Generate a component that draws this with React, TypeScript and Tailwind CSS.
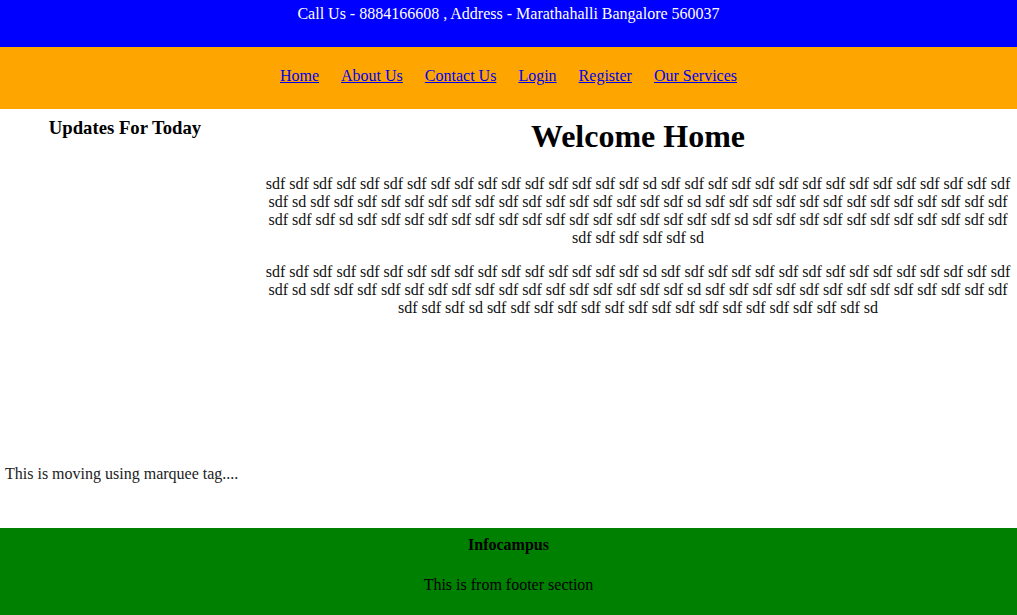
import React from "react";

const chunk = "sdf sdf sdf sdf sdf sdf sdf sdf sdf sdf sdf sdf sdf sdf sdf sdf sd";
const para = (n: number) => Array.from({ length: n }, () => chunk).join(" ");

const links = ["Home", "About Us", "Contact Us", "Login", "Register", "Our Services"];

export default function App() {
  return (
    <div className="font-['Liberation_Serif','Times_New_Roman',serif] text-[16px] text-black bg-white min-h-[615px] flex flex-col">
      <header className="h-[47px] bg-[#0000ff] pt-[5px] text-center text-white leading-[18px]">
        Call Us - 8884166608 , Address - Marathahalli Bangalore 560037
      </header>
      <nav className="h-[62px] bg-[#ffa500] pt-[20px] flex justify-center gap-[22px] leading-[18px]">
        {links.map((l) => (
          <a key={l} href="#" className="text-[#0000ee] underline">
            {l}
          </a>
        ))}
      </nav>
      <div className="flex h-[419px]">
        <aside className="w-[250px] shrink-0 flex flex-col">
          <h3 className="mt-[8px] text-center text-[18.72px] font-bold leading-[22px]">Updates For Today</h3>
          <div className="mt-[326px] pl-[5px] leading-[18px] whitespace-nowrap text-[#222]">
            This is moving using marquee tag....
          </div>
        </aside>
        <main className="flex-1 pl-[9px] text-center">
          <h1 className="mt-[9px] mb-[20px] text-[32px] font-bold leading-[37px]">Welcome Home</h1>
          <p className="leading-[18px] text-[#111]">{para(6)}</p>
          <p className="mt-[16px] leading-[18px] text-[#111]">{para(5)}</p>
        </main>
      </div>
      <footer className="flex-1 min-h-[87px] bg-[#008000] pt-[8px] text-center">
        <h4 className="font-bold leading-[18px]">Infocampus</h4>
        <p className="mt-[22px] leading-[18px]">This is from footer section</p>
      </footer>
    </div>
  );
}
